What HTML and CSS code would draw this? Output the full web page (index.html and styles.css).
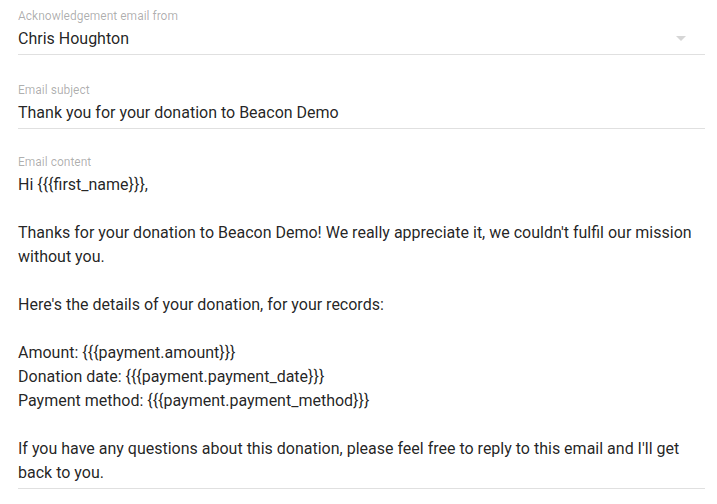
FILE: index.html
```html
<!DOCTYPE html>
<html>
<head>
<meta charset="utf-8">
<link rel="stylesheet" href="styles.css">
</head>
<body>
<div class="form">
  <div class="field">
    <div class="label">Acknowledgement email from</div>
    <div class="input select">
      <span>Chris Houghton</span>
      <svg class="arrow" width="24" height="24" viewBox="0 0 24 24"><path d="M7 10l5 5 5-5z" fill="#d6d6d6"/></svg>
    </div>
  </div>
  <div class="field">
    <div class="label">Email subject</div>
    <div class="input">Thank you for your donation to Beacon Demo</div>
  </div>
  <div class="field content">
    <div class="label">Email content</div>
    <div class="input multi"><p>Hi {{{first_name}}},</p><p class="gap">Thanks for your donation to Beacon Demo! We really appreciate it, we couldn't fulfil our mission without you.</p><p class="gap">Here's the details of your donation, for your records:</p><p class="gap">Amount: {{{payment.amount}}}</p><p>Donation date: {{{payment.payment_date}}}</p><p>Payment method: {{{payment.payment_method}}}</p><p class="gap">If you have any questions about this donation, please feel free to reply to this email and I'll get back to you.</p></div>
  </div>
</div>
</body>
</html>
```
FILE: styles.css
```css
html, body {
  margin: 0;
  padding: 0;
  background: #fff;
}
body {
  font-family: Roboto, "Liberation Sans", sans-serif;
  color: rgba(0, 0, 0, 0.87);
}
.form {
  padding: 8px 12px 0 18px;
  display: flex;
  flex-direction: column;
  gap: 27px;
}
.field {
  display: flex;
  flex-direction: column;
}
.content {
  margin-top: -2px;
}
.label {
  font-size: 12px;
  line-height: 16px;
  color: rgba(0, 0, 0, 0.33);
}
.input {
  font-size: 16px;
  line-height: 24px;
  padding: 3px 0 3px;
  border-bottom: 1px solid #e0e0e0;
}
.select {
  display: flex;
  align-items: center;
  justify-content: space-between;
}
.arrow {
  margin-right: 12px;
  margin-top: -2px;
}
.multi {
  padding: 3px 0 3px;
}
.multi p {
  margin: 0;
}
.multi p.gap {
  margin-top: 24px;
}
```
